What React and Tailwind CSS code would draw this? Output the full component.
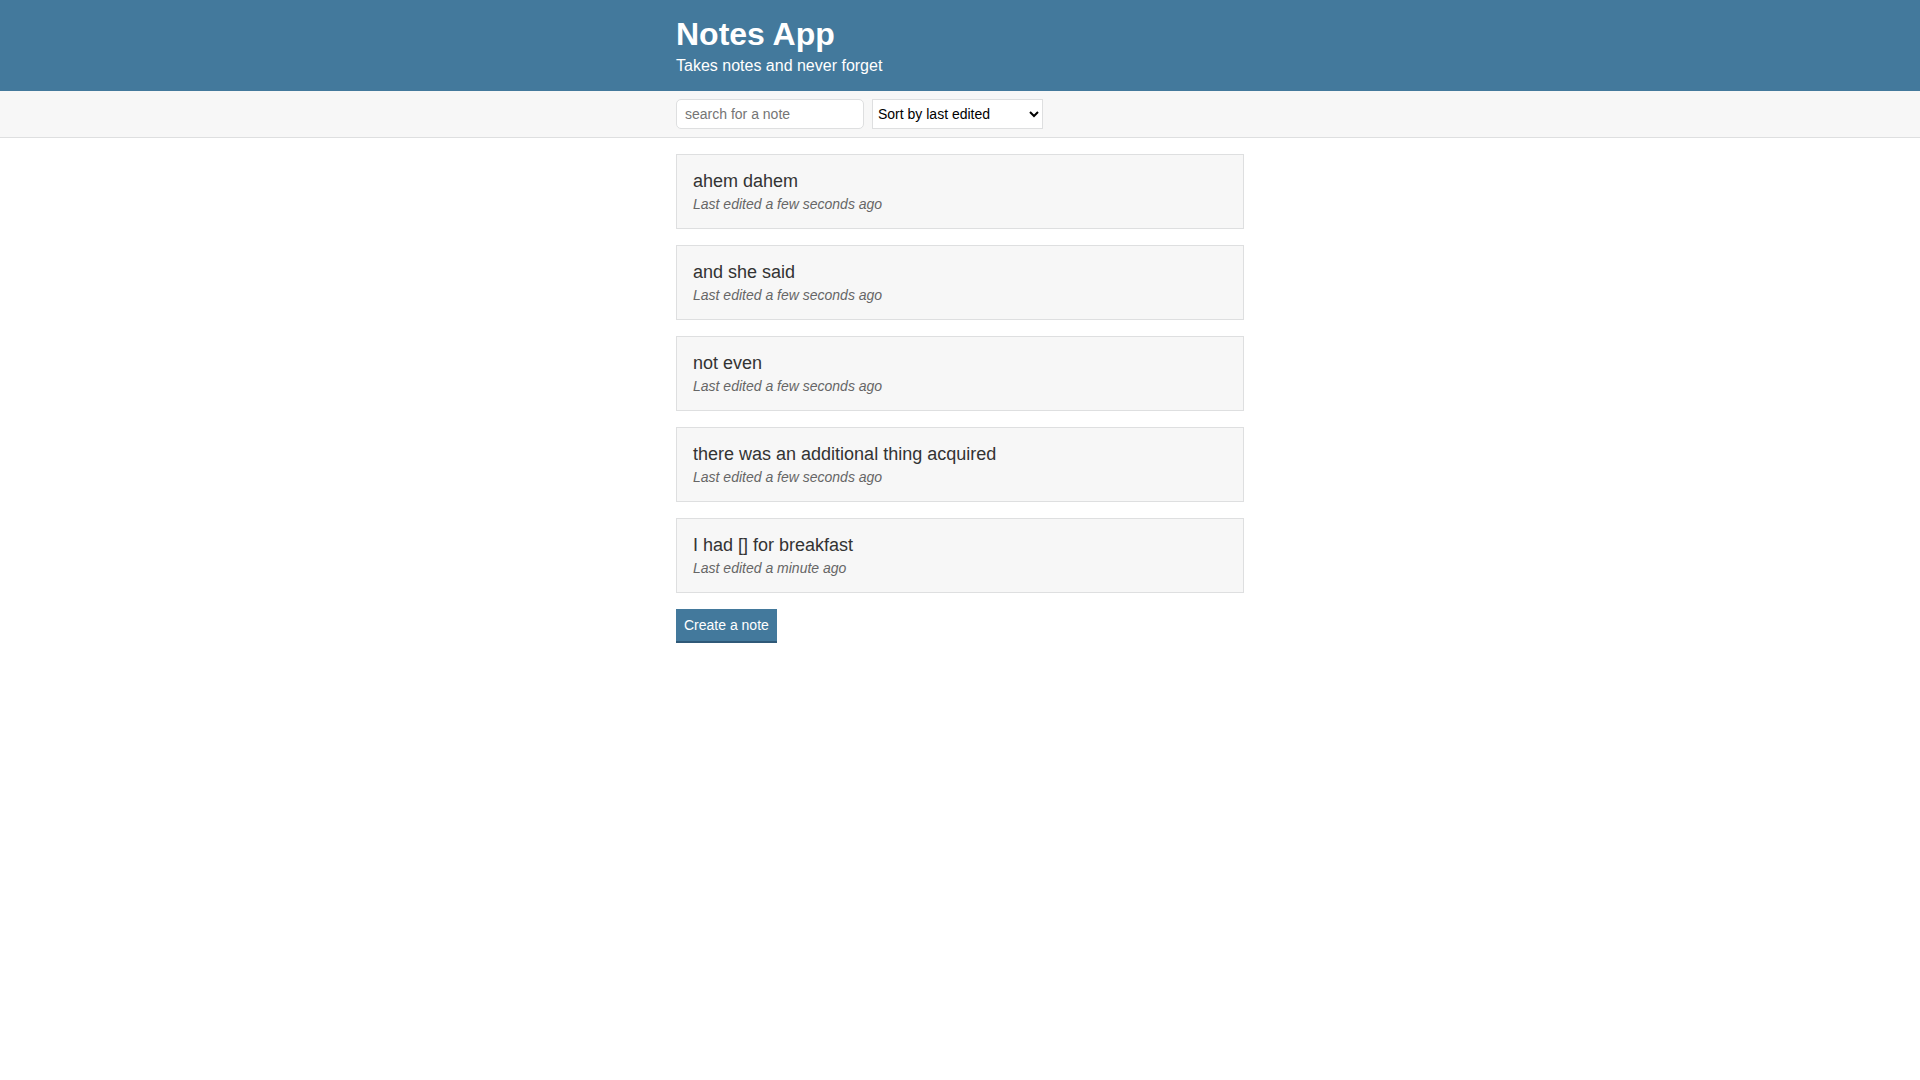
import React, { useState } from 'react'

const notes = [
  { id: 1, title: 'ahem dahem', edited: 'a few seconds ago' },
  { id: 2, title: 'and she said', edited: 'a few seconds ago' },
  { id: 3, title: 'not even', edited: 'a few seconds ago' },
  { id: 4, title: 'there was an additional thing acquired', edited: 'a few seconds ago' },
  { id: 5, title: 'I had [] for breakfast', edited: 'a minute ago' },
]

const App = () => {
  const [search, setSearch] = useState('')
  const [sortBy, setSortBy] = useState('byEdited')

  const filtered = notes.filter(n => n.title.toLowerCase().includes(search.toLowerCase()))

  return (
    <div className="min-h-screen bg-white text-[#333333] font-['Liberation_Sans',Arial,sans-serif]">
      {/* Header */}
      <header className="bg-[#43799c] text-white py-4">
        <div className="max-w-[600px] mx-auto px-4">
          <h1 className="text-[32px] leading-[37px] font-bold mb-1">Notes App</h1>
          <h2 className="text-[16px] leading-[18px] font-light">Takes notes and never forget</h2>
        </div>
      </header>

      {/* Actions */}
      <div className="bg-[#f7f7f7] border-b border-[#dedfe0] py-2">
        <div className="max-w-[600px] mx-auto px-4 flex items-center">
          <input
            type="text"
            placeholder="search for a note"
            value={search}
            onChange={e => setSearch(e.target.value)}
            className="w-[188px] h-[30px] border border-[#dedfe0] rounded-[5px] bg-white px-2 text-[14px] font-light mr-2 outline-none placeholder:text-[#757575]"
          />
          <select
            value={sortBy}
            onChange={e => setSortBy(e.target.value)}
            className="w-[171px] h-[30px] border border-[#dedfe0] rounded-none bg-white text-[14px] text-black font-light pl-px outline-none"
          >
            <option value="byEdited">Sort by last edited</option>
            <option value="byCreated">Sort by recently created</option>
            <option value="alphabetical">Sort alphabetically</option>
          </select>
        </div>
      </div>

      {/* Notes */}
      <div className="max-w-[600px] mx-auto px-4">
        <div className="flex flex-col gap-4 my-4">
          {filtered.map(note => (
            <a
              key={note.id}
              href="#"
              className="block bg-[#f7f7f7] border border-[#dedfe0] p-4 text-[#333333] no-underline"
            >
              <p className="text-[18px] leading-[21px] mb-1">{note.title}</p>
              <p className="text-[14px] leading-[16px] italic text-[#666666] font-light">
                Last edited {note.edited}
              </p>
            </a>
          ))}
        </div>
        <button className="bg-[#43799c] text-white text-[14px] leading-[16px] font-light p-2 border-b-2 border-[#2f5978]">
          Create a note
        </button>
      </div>
    </div>
  )
}

export default App
